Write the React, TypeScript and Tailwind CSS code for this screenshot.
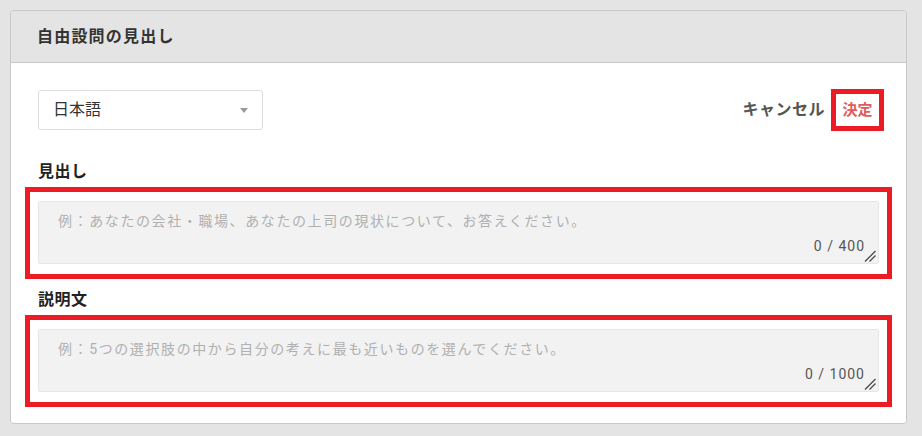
import React from 'react';

interface FieldProps {
  label: string;
  placeholder: string;
  max: number;
  gapTop: string;
}

function Field({ label, placeholder, max, gapTop }: FieldProps) {
  return (
    <div className={gapTop}>
      <div className="text-[16px] leading-[24px] font-bold text-[#222] tracking-[0.5px]">{label}</div>
      <div className="mt-[3px] -mx-[13px] border-[5px] border-[#ed1c24] px-[8px] pt-[9px] pb-[10px]">
        <div className="relative">
          <textarea
            placeholder={placeholder}
            className="block w-full h-[63px] resize-none bg-[#f2f2f2] border border-[#e6e6e6] rounded-[2px] pl-[19px] pt-[9px] text-[14px] leading-[20px] tracking-[1.6px] text-[#333] placeholder:text-[#b0b0b0] outline-none"
          />
          <span className="absolute right-[14px] bottom-[8px] text-[14px] leading-[20px] tracking-[1px] text-[#555] pointer-events-none">
            0 / {max}
          </span>
          {/* resize grip */}
          <svg
            className="absolute right-[3px] bottom-[2px] pointer-events-none"
            width="12"
            height="12"
            viewBox="0 0 12 12"
          >
            <path d="M1 11.5 L11.5 1 M5.5 11.5 L11.5 5.5" stroke="#4a4a4a" strokeWidth="1.3" fill="none" />
          </svg>
        </div>
      </div>
    </div>
  );
}

export default function App() {
  return (
    <div className="min-h-screen bg-[#e4e4e4] pt-[10px] pl-[10px] font-['Roboto','Noto_Sans_CJK_JP',sans-serif]">
      <div className="w-[897px] border border-[#c8c8c8] rounded-[4px] overflow-hidden">
        <div className="h-[52px] bg-[#e4e4e4] border-b border-[#c8c8c8] flex items-center pl-[26px]">
          <h2 className="text-[16px] font-bold text-[#333] tracking-[1.2px]">自由設問の見出し</h2>
        </div>

        <div className="bg-white px-[27px] pt-[27px] pb-[16px]">
          <div className="flex items-center justify-between h-[40px]">
            <div className="w-[225px] h-[40px] border border-[#dcdcdc] rounded-[3px] pl-[14px] pr-[14px] flex items-center justify-between">
              <span className="text-[16px] text-[#333]">日本語</span>
              <svg width="8" height="5" viewBox="0 0 8 5">
                <path d="M0 0 L8 0 L4 5 Z" fill="#9a9a9a" />
              </svg>
            </div>

            <div className="flex items-center -mr-[5px]">
              <button className="text-[16px] font-bold text-[#555] tracking-[0.5px]">キャンセル</button>
              <div className="ml-[6px] w-[53px] h-[42px] border-[5px] border-[#ed1c24] flex items-center justify-center">
                <button className="text-[15px] font-bold text-[#e25b5b]">決定</button>
              </div>
            </div>
          </div>

          <Field
            label="見出し"
            placeholder="例：あなたの会社・職場、あなたの上司の現状について、お答えください。"
            max={400}
            gapTop="mt-[30px]"
          />
          <Field
            label="説明文"
            placeholder="例：5つの選択肢の中から自分の考えに最も近いものを選んでください。"
            max={1000}
            gapTop="mt-[9px]"
          />
        </div>
      </div>
    </div>
  );
}
